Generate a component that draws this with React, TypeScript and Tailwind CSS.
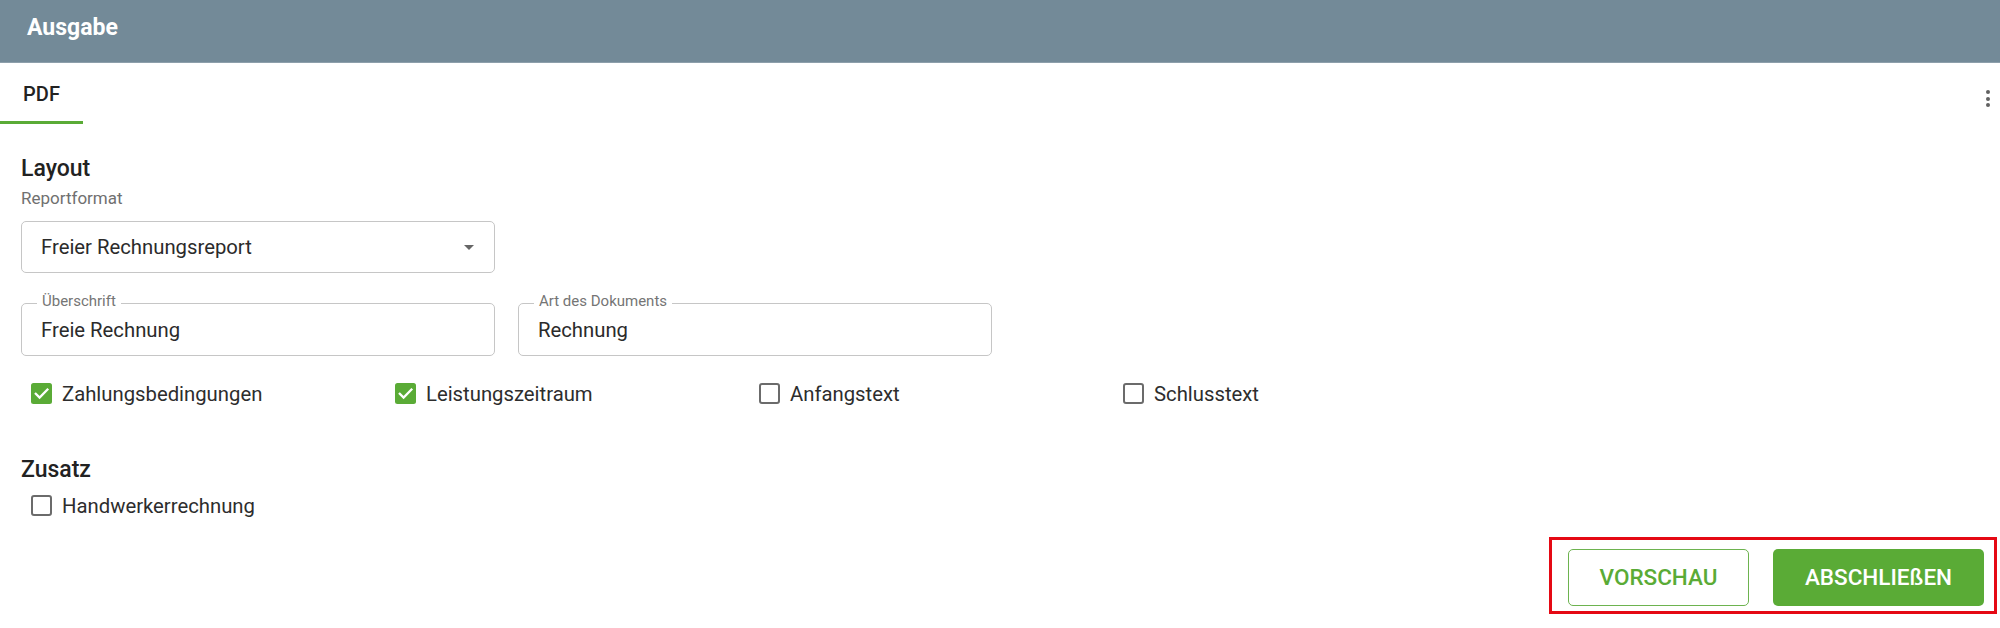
import React from "react";

const GREEN = "#5aab36";

function CheckBox({ checked }: { checked: boolean }) {
  return (
    <svg width="21" height="21" viewBox="0 0 21 21" className="shrink-0">
      {checked ? (
        <>
          <rect x="0" y="0" width="21" height="21" rx="2.5" fill={GREEN} />
          <path
            d="M4.8 10.8 L8.6 14.6 L16.4 6.6"
            fill="none"
            stroke="#ffffff"
            strokeWidth="2.3"
            strokeLinecap="square"
          />
        </>
      ) : (
        <rect
          x="1"
          y="1"
          width="19"
          height="19"
          rx="2"
          fill="none"
          stroke="#6b6b6b"
          strokeWidth="2"
        />
      )}
    </svg>
  );
}

function CheckItem({ label, checked }: { label: string; checked: boolean }) {
  return (
    <label className="flex items-center gap-[10px] h-[21px]">
      <CheckBox checked={checked} />
      <span className="text-[20.3px] leading-[24px] text-[#2d2d2d]">{label}</span>
    </label>
  );
}

function TextField({ label, value }: { label: string; value: string }) {
  return (
    <div className="relative w-[474px] h-[53px] rounded-[5px] border border-[#c6c6c6] flex items-center pl-[19px]">
      <span className="absolute left-[15px] -top-[10px] bg-white px-[5px] text-[15px] leading-[15px] text-[#757575]">
        {label}
      </span>
      <span className="text-[20.3px] leading-[24px] text-[#2b2b2b]">{value}</span>
    </div>
  );
}

const options = [
  { label: "Zahlungsbedingungen", checked: true },
  { label: "Leistungszeitraum", checked: true },
  { label: "Anfangstext", checked: false },
  { label: "Schlusstext", checked: false },
];

export default function App() {
  return (
    <div className="w-full h-[628px] bg-white overflow-hidden font-['Roboto','Liberation_Sans',sans-serif]">
      <header className="h-[63px] bg-[#738a98] border-b border-[#8d9fab] px-[27px] pt-[17px]">
        <h1 className="text-[23px] leading-[22px] font-bold text-white">Ausgabe</h1>
      </header>

      <div className="flex justify-between">
        <div className="w-[83px] h-[61px] flex items-center justify-center border-b-[3px] border-[#5aab36]">
          <span className="text-[20px] leading-[20px] font-medium text-[#222] pt-[3px]">PDF</span>
        </div>
        <div className="flex flex-col gap-[2.5px] mt-[27px] mr-[10px]">
          <span className="w-[4px] h-[4px] rounded-full bg-[#616161]" />
          <span className="w-[4px] h-[4px] rounded-full bg-[#616161]" />
          <span className="w-[4px] h-[4px] rounded-full bg-[#616161]" />
        </div>
      </div>

      <main className="px-[21px]">
        <h2 className="mt-[31px] text-[23px] leading-[28px] font-medium text-[#222]">Layout</h2>
        <p className="mt-[5px] text-[17px] leading-[20px] text-[#707070]">Reportformat</p>

        <div className="mt-[13px] w-[474px] h-[52px] rounded-[5px] border border-[#c6c6c6] flex items-center justify-between pl-[19px] pr-[20px]">
          <span className="text-[20.3px] leading-[24px] text-[#2b2b2b]">Freier Rechnungsreport</span>
          <svg width="10" height="5" viewBox="0 0 10 5">
            <path d="M0 0 L10 0 L5 5 Z" fill="#666666" />
          </svg>
        </div>

        <div className="mt-[30px] flex gap-[23px]">
          <TextField label="Überschrift" value="Freie Rechnung" />
          <TextField label="Art des Dokuments" value="Rechnung" />
        </div>

        <div className="mt-[27px] pl-[10px] grid grid-cols-[repeat(4,364px)]">
          {options.map((o) => (
            <CheckItem key={o.label} label={o.label} checked={o.checked} />
          ))}
        </div>

        <h2 className="mt-[52px] text-[23px] leading-[28px] font-medium text-[#222]">Zusatz</h2>
        <div className="mt-[11px] pl-[10px]">
          <CheckItem label="Handwerkerrechnung" checked={false} />
        </div>
      </main>

      <div className="mt-[21px] flex justify-end pr-[3px]">
        <div className="flex gap-[24px] border-[3px] border-[#e50914] pt-[9px] pb-[5px] pl-[16px] pr-[10px]">
          <button className="w-[181px] h-[57px] rounded-[5px] border border-[#6db34f] text-[22.5px] font-medium text-[#5aab36]">
            VORSCHAU
          </button>
          <button className="w-[211px] h-[57px] rounded-[5px] bg-[#5aab36] text-[22.5px] font-medium text-white">
            ABSCHLIEßEN
          </button>
        </div>
      </div>
    </div>
  );
}
